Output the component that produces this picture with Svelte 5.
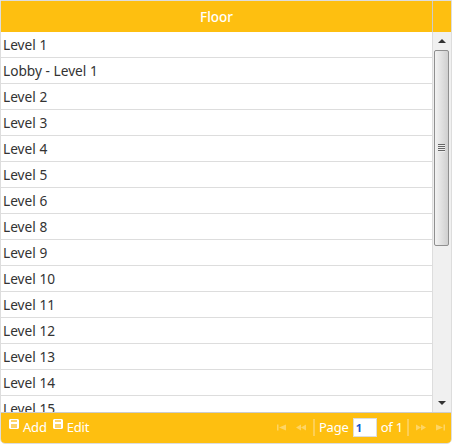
<script>
	const floors = ['Level 1', 'Lobby - Level 1', 'Level 2', 'Level 3', 'Level 4', 'Level 5', 'Level 6', 'Level 8', 'Level 9', 'Level 10', 'Level 11', 'Level 12', 'Level 13', 'Level 14', 'Level 15'];
</script>

<div class="grid">
	<div class="head">
		<div class="title">Floor</div>
		<div class="spacer"></div>
	</div>
	<div class="body">
		<div class="rows">
			{#each floors as floor}
				<div class="row">{floor}</div>
			{/each}
		</div>
		<div class="scrollbar">
			<div class="arrow up"></div>
			<div class="track">
				<div class="thumb">
					<div class="grip"></div>
				</div>
			</div>
			<div class="arrow down"></div>
		</div>
	</div>
	<div class="pager">
		<div class="actions">
			<span class="action">
				<svg class="save" width="10" height="10" viewBox="0 0 10 10"><path d="M1 0h8l1 1v8l-1 1H1L0 9V1z" fill="#fff" /><rect x="2" y="5" width="6" height="4" fill="#fdd36a" /><rect x="2" y="1" width="6" height="2" fill="#fdd36a" /></svg>
				Add
			</span>
			<span class="action">
				<svg class="save" width="10" height="10" viewBox="0 0 10 10"><path d="M1 0h8l1 1v8l-1 1H1L0 9V1z" fill="#fff" /><rect x="2" y="5" width="6" height="4" fill="#fdd36a" /><rect x="2" y="1" width="6" height="2" fill="#fdd36a" /></svg>
				Edit
			</span>
		</div>
		<div class="paging">
			<div class="nav">
				<svg width="12" height="9" viewBox="0 0 12 9"><path d="M1 1.500h1.500v6H1zM10 1.500v6L3 4.500z" fill="#ffdf8a" /></svg>
				<svg width="12" height="9" viewBox="0 0 12 9"><path d="M6 1.500v6L1 4.500zM11 1.500v6L6 4.500z" fill="#ffdf8a" /></svg>
			</div>
			<span class="sep"></span>
			<span class="label">Page</span>
			<span class="input">1</span>
			<span class="label">of 1</span>
			<span class="sep"></span>
			<div class="nav">
				<svg width="12" height="9" viewBox="0 0 12 9"><path d="M1 1.500v6l5-3zM6 1.500v6l5-3z" fill="#ffdf8a" /></svg>
				<svg width="12" height="9" viewBox="0 0 12 9"><path d="M2 1.500v6l7-3zM9.500 1.500H11v6H9.500z" fill="#ffdf8a" /></svg>
			</div>
		</div>
	</div>
</div>

<style>
	:global(body) {
		margin: 0;
		background: #fff;
	}

	.grid {
		width: 452px;
		height: 444px;
		box-sizing: border-box;
		display: flex;
		flex-direction: column;
		font-family: "Noto Sans", sans-serif;
		font-size: 13.7px;
		color: #333;
		border: 1px solid #ddd;
		border-radius: 0 0 5px 5px;
		overflow: hidden;
	}

	.head {
		display: flex;
		height: 31px;
		flex: none;
		background: #febf10;
		color: #fff;
		font-weight: 500;
		font-size: 13.5px;
	}

	.title {
		flex: 1;
		display: flex;
		align-items: center;
		justify-content: center;
		border-right: 1px solid #ccc;
	}

	.spacer {
		width: 18px;
	}

	.body {
		flex: 1;
		display: flex;
		min-height: 0;
	}

	.rows {
		flex: 1;
		overflow: hidden;
		border-right: 1px solid #ddd;
	}

	.row {
		height: 25px;
		line-height: 25px;
		padding-left: 2px;
		border-bottom: 1px solid #ddd;
	}

	.scrollbar {
		width: 18px;
		flex: none;
		display: flex;
		flex-direction: column;
		background: #f0f0f0;
	}

	.arrow {
		height: 18px;
		flex: none;
		position: relative;
	}

	.arrow::after {
		content: "";
		position: absolute;
		left: 5px;
		top: 7px;
		border-left: 4px solid transparent;
		border-right: 4px solid transparent;
	}

	.up::after {
		border-bottom: 4px solid #333;
	}

	.down::after {
		border-top: 4px solid #333;
	}

	.track {
		flex: 1;
	}

	.thumb {
		box-sizing: border-box;
		width: 15px;
		height: 196px;
		margin-left: 1px;
		border: 1px solid #8f8f8f;
		border-radius: 2px;
		background: linear-gradient(90deg, #f2f2f2, #cfcfcf);
		display: flex;
		align-items: center;
		justify-content: center;
	}

	.grip {
		width: 7px;
		height: 8px;
		background: repeating-linear-gradient(180deg, #666 0 1px, #eee 1px 2px);
	}

	.pager {
		height: 31px;
		flex: none;
		box-sizing: border-box;
		background: #febf10;
		border-top: 1px solid #ccc;
		display: flex;
		align-items: center;
		justify-content: space-between;
		color: #fff;
		font-size: 13px;
		letter-spacing: -0.2px;
		padding: 0 3px 2px 8px;
	}

	.actions {
		display: flex;
		gap: 6px;
	}

	.action {
		display: flex;
		gap: 4px;
	}

	.save {
		margin-top: 1px;
	}

	.paging {
		display: flex;
		align-items: center;
		gap: 4px;
	}

	.nav {
		display: flex;
		gap: 7px;
		margin: 0 2px;
		opacity: 0.7;
	}

	.sep {
		width: 2px;
		height: 17px;
		background: #fdcf55;
	}

	.input {
		box-sizing: border-box;
		width: 24px;
		height: 19px;
		background: #fff;
		border: 1px solid #ddd;
		color: #15c;
		font-size: 11px;
		font-weight: bold;
		line-height: 17px;
		padding-left: 2px;
	}
</style>
